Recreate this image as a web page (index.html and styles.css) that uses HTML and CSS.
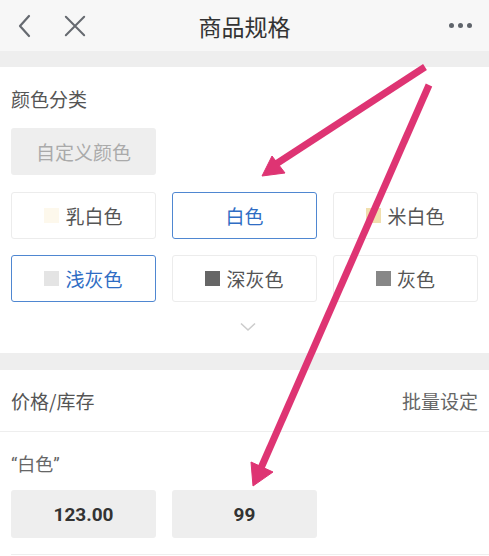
FILE: index.html
```html
<!DOCTYPE html>
<html lang="zh">
<head>
<meta charset="utf-8">
<link rel="stylesheet" href="styles.css">
</head>
<body>
<div class="page">
  <header class="topbar">
    <div class="left-icons">
      <svg class="icon" width="20" height="24" viewBox="0 0 20 24"><path d="M13 2 L4 12 L13 22" fill="none" stroke="#666a70" stroke-width="2.2" stroke-linecap="round" stroke-linejoin="round"/></svg>
      <svg class="icon close" width="24" height="24" viewBox="0 0 24 24"><path d="M2 2 L22 22 M22 2 L2 22" fill="none" stroke="#666a70" stroke-width="2.2" stroke-linecap="round"/></svg>
    </div>
    <div class="title">商品规格</div>
    <div class="more"><span></span><span></span><span></span></div>
  </header>
  <div class="band"></div>
  <section class="colors">
    <div class="label">颜色分类</div>
    <div class="custom">自定义颜色</div>
    <div class="grid">
      <div class="opt"><i class="sw" style="background:#fdf8ec"></i>乳白色</div>
      <div class="opt sel">白色</div>
      <div class="opt"><i class="sw" style="background:#f1dfae"></i>米白色</div>
      <div class="opt sel"><i class="sw" style="background:#e4e4e4"></i>浅灰色</div>
      <div class="opt"><i class="sw" style="background:#666666"></i>深灰色</div>
      <div class="opt"><i class="sw" style="background:#878787"></i>灰色</div>
    </div>
    <div class="expand">
      <svg width="16" height="10" viewBox="0 0 16 10"><path d="M1 1.5 L8 8 L15 1.5" fill="none" stroke="#cccccc" stroke-width="1.6"/></svg>
    </div>
  </section>
  <div class="band band2"></div>
  <section class="price">
    <div class="price-head"><span>价格/库存</span><span class="batch">批量设定</span></div>
    <div class="variant">
      <div class="vname">“白色”</div>
      <div class="inputs">
        <div class="inp">123.00</div>
        <div class="inp">99</div>
      </div>
    </div>
    <div class="divider"></div>
  </section>
  <svg class="arrows" width="489" height="556" viewBox="0 0 489 556">
    <g fill="#de3473" stroke="#de3473">
      <line x1="425" y1="67" x2="276" y2="164" stroke-width="7"/>
      <polygon points="262,176 272,156 285,173" stroke-width="1" stroke-linejoin="round"/>
      <line x1="429" y1="85" x2="261" y2="468" stroke-width="7"/>
      <polygon points="253,486 251,462 273,472" stroke-width="1" stroke-linejoin="round"/>
    </g>
  </svg>
</div>
</body>
</html>
```
FILE: styles.css
```css
* { box-sizing: border-box; }
html, body { margin: 0; padding: 0; background: #fff; }
body {
  font-family: "Noto Sans CJK SC", "Noto Sans", Roboto, sans-serif;
  color: #555;
}
.page { position: relative; width: 489px; height: 556px; overflow: hidden; }
.topbar {
  height: 51px;
  background: #f7f7f7;
  display: flex;
  align-items: center;
  position: relative;
  padding: 0 14px;
}
.left-icons { display: flex; align-items: center; gap: 28px; margin-left: 2px; }
.icon { display: block; }
.close { width: 22px; height: 22px; }
.title {
  position: absolute; left: 0; right: 0; top: 0; height: 51px;
  display: flex; align-items: center; justify-content: center;
  font-size: 23px; color: #333; pointer-events: none;
}
.more { margin-left: auto; display: flex; gap: 4px; margin-right: 3px; }
.more span { width: 5px; height: 5px; border-radius: 50%; background: #5f646b; }
.band { height: 16px; background: #eeeeee; }
.band2 { height: 17px; }
.colors { padding: 19px 11px 0; height: 286px; }
.label { font-size: 19px; line-height: 25px; color: #555; }
.custom {
  margin-top: 17px; width: 145px; height: 47px;
  background: #eeeeee; border-radius: 3px;
  display: flex; align-items: center; justify-content: center;
  font-size: 19px; color: #aaaaaa;
}
.grid {
  margin-top: 17px;
  display: grid; grid-template-columns: repeat(3, 1fr);
  column-gap: 16px; row-gap: 16px;
}
.opt {
  height: 47px; border: 1px solid #ececec; border-radius: 3px;
  display: flex; align-items: center; justify-content: center;
  font-size: 19px; color: #555;
}
.opt.sel { border-color: #4f87d1; color: #2f6dc4; }
.sw { display: inline-block; width: 15px; height: 15px; margin-right: 6px; }
.expand { display: flex; justify-content: center; margin-top: 20px; padding-left: 6px; }
.price-head {
  height: 62px; border-bottom: 1px solid #eeeeee;
  display: flex; align-items: center; justify-content: space-between;
  padding: 0 11px; font-size: 19px; color: #555;
}
.batch { color: #666; }
.variant { padding: 22px 11px 0; }
.vname {
  font-family: Roboto, "Noto Sans CJK SC", sans-serif;
  font-size: 18px; line-height: 22px; color: #666;
}
.inputs { margin-top: 14px; display: flex; gap: 16px; }
.inp {
  width: 145px; height: 48px; background: #eeeeee; border-radius: 3px;
  display: flex; align-items: center; justify-content: center;
  font-family: Roboto, "Noto Sans", sans-serif; font-weight: 700;
  font-size: 19px; color: #333;
}
.divider { margin: 16px 0 0 11px; border-top: 1px solid #eeeeee; }
.arrows { position: absolute; left: 0; top: 0; pointer-events: none; }
```
